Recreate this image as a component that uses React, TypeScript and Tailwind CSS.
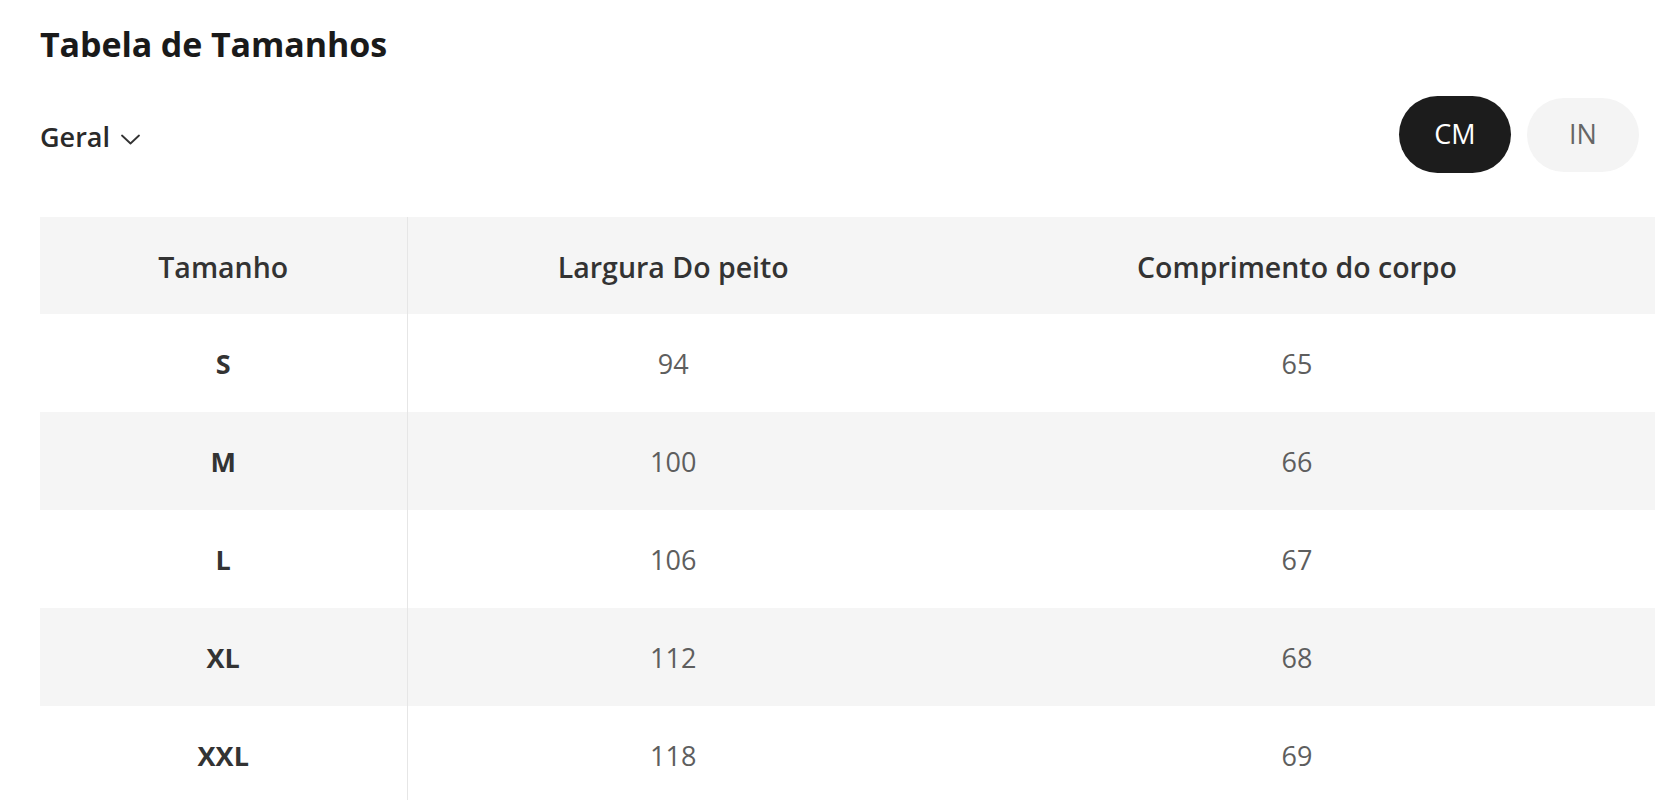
import React from "react";

const rows = [
  { s: "S", a: "94", b: "65" },
  { s: "M", a: "100", b: "66" },
  { s: "L", a: "106", b: "67" },
  { s: "XL", a: "112", b: "68" },
  { s: "XXL", a: "118", b: "69" },
];

export default function App() {
  return (
    <div
      className="w-[1669px] h-[800px] overflow-hidden bg-white pl-[40px] pr-[14px]"
      style={{ fontFamily: '"Open Sans", "Noto Sans", sans-serif' }}
    >
      <h1 className="pt-[21px] text-[34px] leading-[46px] font-bold text-[#1a1a1a] tracking-[-0.1px]">
        Tabela de Tamanhos
      </h1>
      <div className="mt-[29px] flex items-center justify-between pr-[16px]">
        <button className="mt-[6px] flex items-center gap-[11px] text-[27px] font-semibold text-[#2a2a2a]">
          <span>Geral</span>
          <svg width="19" height="11" viewBox="0 0 19 11" fill="none" className="mt-[4px]">
            <path d="M1 1.5 L9.5 9.5 L18 1.5" stroke="#333" strokeWidth="1.8" strokeLinecap="round" strokeLinejoin="round" />
          </svg>
        </button>
        <div className="flex items-center gap-[16px]">
          <div className="w-[112px] h-[77px] rounded-full bg-[#1c1c1c] text-white flex items-center justify-center text-[27px]">
            CM
          </div>
          <div className="w-[112px] h-[74px] rounded-full bg-[#f4f4f4] text-[#666] flex items-center justify-center text-[27px]">
            IN
          </div>
        </div>
      </div>
      <table className="mt-[44px] w-[1615px] table-fixed border-collapse">
        <colgroup>
          <col className="w-[367px]" />
          <col className="w-[532px]" />
          <col className="w-[716px]" />
        </colgroup>
        <thead>
          <tr className="h-[97px] bg-[#f5f5f5]">
            <th className="border-r border-[#e6e6e6] pt-[3px] text-[28.5px] font-semibold text-[#333] text-center">Tamanho</th>
            <th className="pt-[3px] text-[28.5px] font-semibold text-[#333] text-center">Largura Do peito</th>
            <th className="pt-[3px] text-[28.5px] font-semibold text-[#333] text-center">Comprimento do corpo</th>
          </tr>
        </thead>
        <tbody>
          {rows.map((r, i) => (
            <tr key={r.s} className={i % 2 === 1 ? "h-[98px] bg-[#f5f5f5]" : "h-[98px] bg-white"}>
              <td className="border-r border-[#e6e6e6] pt-[3px] text-center text-[27px] font-bold text-[#333]">{r.s}</td>
              <td className="pt-[3px] text-center text-[27px] text-[#5e5e5e]">{r.a}</td>
              <td className="pt-[3px] text-center text-[27px] text-[#5e5e5e]">{r.b}</td>
            </tr>
          ))}
        </tbody>
      </table>
    </div>
  );
}
